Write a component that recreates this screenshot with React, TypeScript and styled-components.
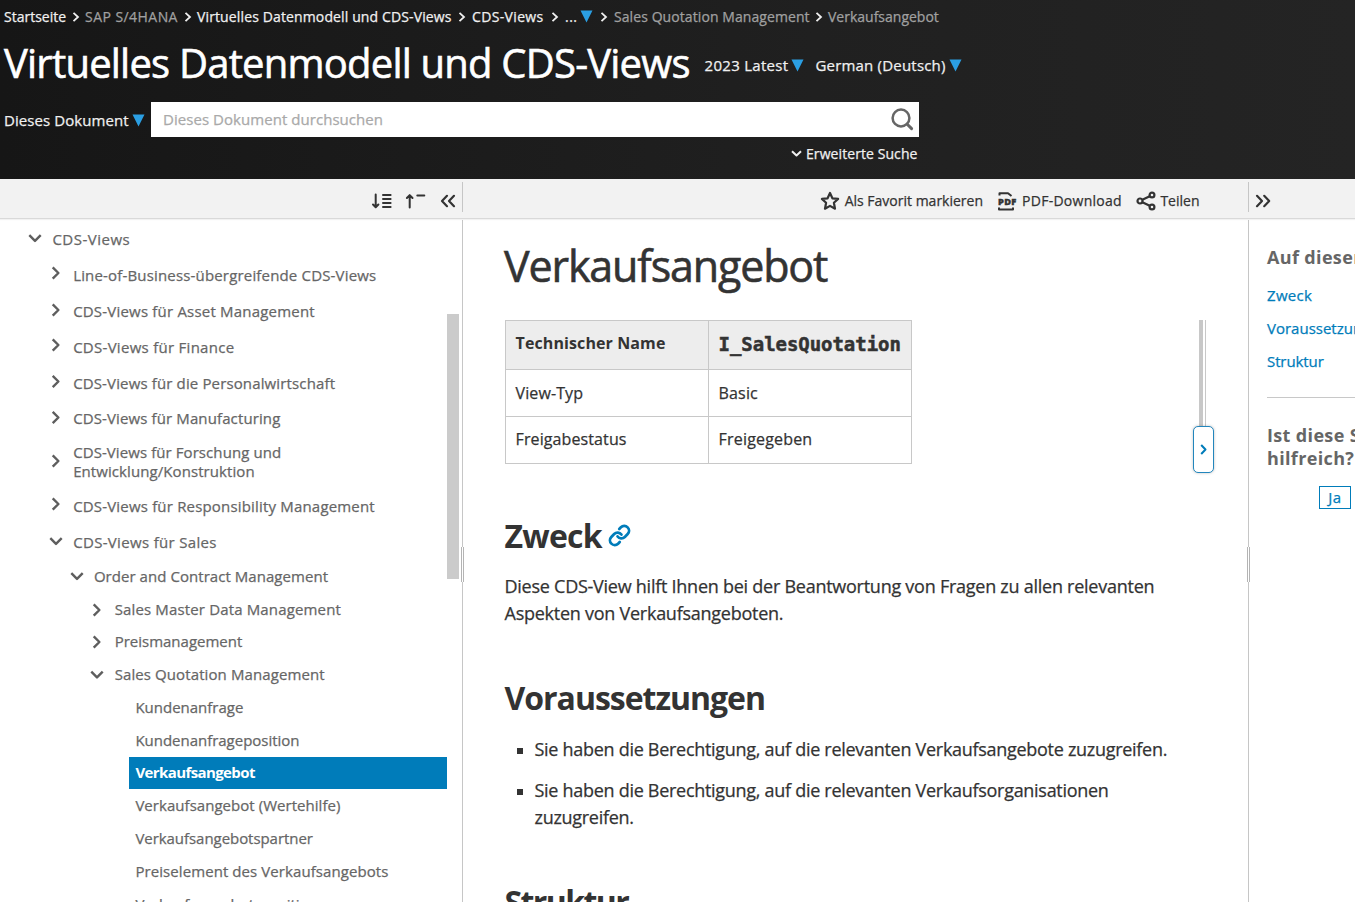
import React from "react";
import styled, { createGlobalStyle, css } from "styled-components";

const GlobalStyle = createGlobalStyle`
  * { box-sizing: border-box; }
  html, body { margin: 0; height: 100%; overflow: hidden; }
  body {
    font-family: "Open Sans", "Noto Sans", sans-serif;
    background: #fff;
    color: #333;
    -webkit-text-stroke: 0.25px currentColor;
  }
  #root { height: 100%; }
  h1, h2, h3, p, ul { margin: 0; padding: 0; }
  svg { display: block; flex: none; }
`;

type Track = { $ls?: number };
const tracking = css<Track>`letter-spacing: ${({ $ls = 0 }) => $ls}px;`;

const Page = styled.div`
  display: flex;
  flex-direction: column;
  height: 902px;
  width: 1355px;
  overflow: hidden;
`;

/* ---------- header ---------- */

const Header = styled.header`
  flex: none;
  height: 179px;
  padding-left: 4px;
  background: linear-gradient(90deg, #161616 0%, #202020 60%, #242424 100%);
  color: #f0f0f0;
`;

const Breadcrumbs = styled.nav`
  display: flex;
  align-items: center;
  height: 33px;
  font-size: 14px;
  white-space: nowrap;
`;

const Crumb = styled.span<Track & { $muted?: boolean; $w: number }>`
  flex: none;
  width: ${({ $w }) => $w}px;
  color: ${({ $muted }) => ($muted ? "#a0a0a0" : "#f0f0f0")};
  ${tracking}
`;

const CrumbSeparator = styled.span<{ $gap?: number }>`
  flex: none;
  display: flex;
  justify-content: center;
  width: ${({ $gap = 20 }) => $gap}px;
`;

const TitleRow = styled.div`
  display: flex;
  align-items: center;
  height: 61px;
`;

const DocTitle = styled.h1`
  width: 700.5px;
  height: 61px;
  font-size: 40px;
  font-weight: 400;
  line-height: 59px;
  letter-spacing: -0.79px;
  white-space: nowrap;
  color: #fff;
  -webkit-text-stroke-width: 0.6px;
`;

const Picker = styled.span<Track & { $mr?: number }>`
  display: flex;
  align-items: center;
  gap: 3px;
  margin-right: ${({ $mr = 0 }) => $mr}px;
  padding-top: 3px;
  font-size: 15px;
  white-space: nowrap;
  ${tracking}
`;

const SearchRow = styled.div`
  display: flex;
  align-items: center;
  height: 35px;
  margin-top: 8px;
`;

const ScopePicker = styled(Picker)`
  width: 147px;
  padding-top: 1px;
  letter-spacing: 0.08px;
`;

const SearchBox = styled.div`
  display: flex;
  align-items: center;
  justify-content: space-between;
  width: 768px;
  height: 35px;
  padding: 0 5px 2px 12px;
  background: #fff;
  color: #a9a9a9;
  font-size: 15px;
  letter-spacing: 0.05px;
`;

const AdvancedSearch = styled.div`
  display: flex;
  align-items: center;
  justify-content: flex-end;
  gap: 4px;
  width: 913.5px;
  height: 33px;
  font-size: 14px;
  letter-spacing: 0.08px;
`;

/* ---------- toolbar ---------- */

const Toolbar = styled.div`
  flex: none;
  display: flex;
  height: 40px;
  background: #f2f2f2;
  border-bottom: 1px solid #d9d9d9;
  box-shadow: 0 1px 1px rgba(0, 0, 0, 0.05);
  font-size: 14px;
  z-index: 1;
`;

const ToolbarSection = styled.div<{ $w?: number; $pr?: number; $pl?: number }>`
  display: flex;
  align-items: center;
  justify-content: ${({ $w }) => ($w ? "flex-end" : "flex-start")};
  ${({ $w }) => ($w ? `width: ${$w}px;` : "flex: 1;")}
  padding: 4px ${({ $pr = 0 }) => $pr}px 0 ${({ $pl = 0 }) => $pl}px;
`;

const ToolbarDivider = styled.div`
  width: 1px;
  height: 30px;
  margin-top: 3px;
  background: #c6c6c6;
`;

const ActionButton = styled.span<Track & { $gap?: number; $mr?: number }>`
  display: flex;
  align-items: center;
  gap: ${({ $gap = 5 }) => $gap}px;
  margin-right: ${({ $mr = 0 }) => $mr}px;
  white-space: nowrap;
  ${tracking}
`;

/* ---------- columns ---------- */

const Columns = styled.div`
  flex: 1;
  min-height: 0;
  display: flex;
`;

const TreePane = styled.aside`
  position: relative;
  flex: none;
  width: 462px;
  padding-top: 2px;
  overflow: hidden;
`;

const TreeScrollThumb = styled.div`
  position: absolute;
  left: 447px;
  top: 95px;
  width: 12px;
  height: 265px;
  background: #cbcbcb;
`;

const TreeRow = styled.div<{ $level: number; $h: number; $lift?: number }>`
  display: flex;
  align-items: center;
  height: ${({ $h }) => $h}px;
  padding-left: ${({ $level }) => 28 + $level * 20.75}px;
  color: #666;
  font-size: 15px;
  line-height: 19px;
  & > svg { transform: translateY(${({ $lift = 0 }) => -$lift}px); }
`;

const TreeLabel = styled.span<Track>`
  margin-left: 10.4px;
  white-space: pre;
  ${tracking}
`;

const TreeLeaf = styled.div<Track & { $active?: boolean }>`
  display: flex;
  align-items: center;
  width: 318px;
  height: ${({ $active }) => ($active ? 32 : 32.8)}px;
  margin: 0 0 ${({ $active }) => ($active ? 0.8 : 0)}px 129px;
  padding: 0 0 2px 6.4px;
  background: ${({ $active }) => ($active ? "#007cba" : "transparent")};
  color: ${({ $active }) => ($active ? "#fff" : "#666")};
  font-size: 15px;
  font-weight: ${({ $active }) => ($active ? 700 : 400)};
  -webkit-text-stroke-width: ${({ $active }) => ($active ? 0 : 0.25)}px;
  white-space: nowrap;
  ${tracking}
`;

const Splitter = styled.div`
  position: relative;
  flex: none;
  width: 1px;
  margin-top: 1px;
  background: #c6c6c6;
`;

const SplitterGrip = styled.div`
  position: absolute;
  left: -1px;
  top: 327px;
  width: 3px;
  height: 35px;
  background: #fff;
  border: solid #b4b4b4;
  border-width: 0 1px;
`;

const Article = styled.main`
  flex: none;
  width: 785px;
  padding: 14px 34px 0 42px;
  overflow: hidden;
`;

const ArticleTitle = styled.h1`
  height: 66px;
  margin-left: -1px;
  font-size: 43px;
  font-weight: 400;
  line-height: 66px;
  letter-spacing: -1.15px;
  -webkit-text-stroke-width: 0.6px;
`;

const TableArea = styled.div`
  display: flex;
  justify-content: space-between;
  height: 144px;
  margin-top: 21px;
`;

const Table = styled.div`
  display: grid;
  grid-template-columns: 202px 202px;
  grid-template-rows: 48px 46px 46px;
  gap: 1px;
  width: 407px;
  height: 144px;
  border: 1px solid #c8c8c8;
  background: #c8c8c8;
`;

const Cell = styled.div<Track & { $head?: boolean; $pb?: number }>`
  display: flex;
  align-items: center;
  padding-left: 9.6px;
  padding-bottom: ${({ $pb = 1 }) => $pb}px;
  background: ${({ $head }) => ($head ? "#ededed" : "#fff")};
  font-size: 16px;
  font-weight: ${({ $head }) => ($head ? 700 : 400)};
  -webkit-text-stroke-width: ${({ $head }) => ($head ? 0 : 0.25)}px;
  white-space: nowrap;
  ${tracking}
`;

const Code = styled.code`
  font-family: "DejaVu Sans Mono", monospace;
  font-size: 19px;
  font-weight: 700;
  letter-spacing: -0.05px;
  -webkit-text-stroke: 0.5px currentColor;
`;

const TableScroll = styled.div`
  position: relative;
  width: 21px;
  height: 152px;
`;

const ScrollShadow = styled.div`
  width: 7px;
  height: 107px;
  margin-left: 6px;
  border: solid #c8c8c8;
  border-width: 0 1px 0 4px;
`;

const ExpandButton = styled.div`
  position: absolute;
  top: 106px;
  left: 0;
  display: flex;
  align-items: center;
  justify-content: center;
  width: 21px;
  height: 47px;
  padding-bottom: 1px;
  border: 1px solid #2286bd;
  border-radius: 5px;
  background: #fff;
  box-shadow: 0 0 3px rgba(0, 0, 0, 0.25);
  color: #007cba;
`;

const SectionTitle = styled.h2<Track & { $mt: number }>`
  display: flex;
  align-items: center;
  gap: 6px;
  height: 44px;
  margin-top: ${({ $mt }) => $mt}px;
  margin-left: -0.5px;
  font-size: 32px;
  line-height: 44px;
  -webkit-text-stroke-width: 0;
  ${tracking}
`;

const Paragraph = styled.p`
  margin: 15px 0 0 -0.5px;
  font-size: 18px;
  line-height: 27px;
  letter-spacing: -0.255px;
  white-space: pre-line;
`;

const Bullets = styled.ul`
  margin-top: 16px;
  list-style: none;
`;

const Bullet = styled.li`
  display: flex;
  margin-bottom: 14px;
  font-size: 18px;
  line-height: 27px;
  letter-spacing: -0.29px;
  white-space: pre;
  &::before {
    content: "";
    flex: none;
    width: 6px;
    height: 6px;
    margin: 12px 12px 0 11.5px;
    background: #333;
  }
`;

const Outline = styled.aside`
  flex: none;
  width: 106px;
  padding: 27px 0 0 18px;
  overflow: hidden;
  white-space: nowrap;
`;

const OutlineTitle = styled.h3<Track>`
  color: #666;
  font-size: 18px;
  line-height: 23px;
  white-space: pre;
  -webkit-text-stroke-width: 0;
  ${tracking}
`;

const OutlineLink = styled.div<Track & { $mt?: number }>`
  margin-top: ${({ $mt = 0 }) => $mt}px;
  height: 33px;
  line-height: 33px;
  color: #007cba;
  font-size: 15px;
  ${tracking}
`;

const OutlineRule = styled.div`
  width: 200px;
  height: 1px;
  margin: 19px 0 26px;
  background: #c8c8c8;
`;

const YesButton = styled.div`
  display: flex;
  align-items: center;
  justify-content: center;
  width: 32px;
  height: 23px;
  margin: 16px 0 0 52px;
  padding-bottom: 2px;
  border: 1px solid #007cba;
  color: #007cba;
  font-size: 15px;
  letter-spacing: 0.5px;
`;

/* ---------- icons ---------- */

const Triangle = () => (
  <svg width="13" height="13" viewBox="0 0 13 13"><path d="M0.5 0.5h12L6.5 12.5z" fill="#2b9fe3" /></svg>
);

const CrumbChevron = () => (
  <svg width="8" height="10" viewBox="0 0 8 10" fill="none" stroke="#f0f0f0" strokeWidth="1.8"><path d="M1.5 0.8L6 5 1.5 9.2" /></svg>
);

const Chevron = ({ open }: { open?: boolean }) => (
  <svg width="14" height="14" viewBox="0 0 14 14" fill="none" stroke="#5e5e5e" strokeWidth="2.4" strokeLinejoin="round">
    <path d={open ? "M1.3 4.2L7 9.9l5.7-5.7" : "M3.7 1.3L9.4 7l-5.7 5.7"} />
  </svg>
);

const ArrowsLeft = () => (
  <svg width="16" height="14" viewBox="0 0 16 14" fill="none" stroke="#333" strokeWidth="2.2" strokeLinecap="round" strokeLinejoin="round">
    <path d="M7 1.800L2 7l5 5.200M14 1.800L9 7l5 5.200" />
  </svg>
);

const ArrowsRight = () => (
  <svg width="16" height="14" viewBox="0 0 16 14" fill="none" stroke="#333" strokeWidth="2.2" strokeLinecap="round" strokeLinejoin="round">
    <path d="M2 1.800L7 7l-5 5.200M9.200 1.800L14.200 7l-5 5.200" />
  </svg>
);

const ExpandAll = () => (
  <svg width="21" height="16" viewBox="0 0 21 16" fill="none" stroke="#333" strokeWidth="2" strokeLinecap="round" strokeLinejoin="round">
    <path d="M4.700 1.500v12M2 11.500l2.700 2.700 2.700-2.700M12 2h7.600M12 6h7.600M12 10h7.600M12 14h7.600" />
  </svg>
);

const CollapseAll = () => (
  <svg width="21" height="16" viewBox="0 0 21 16" fill="none" stroke="#333" strokeWidth="2" strokeLinecap="round" strokeLinejoin="round">
    <path d="M4.700 14.500V2.500M1.900 5l2.800-2.900L7.500 5M12.300 2.400h7" />
  </svg>
);

const SearchIcon = () => (
  <svg width="24" height="24" viewBox="0 0 24 24" fill="none" stroke="#666" strokeWidth="2.5" strokeLinecap="round">
    <circle cx="11" cy="11" r="8.400" /><path d="M17.200 17.200L21.600 21.600" strokeWidth="3" />
  </svg>
);

const StarIcon = () => (
  <svg width="20" height="20" viewBox="0 0 20 20" fill="none" stroke="#333" strokeWidth="2.200" strokeLinejoin="round">
    <path d="M10 2l2.400 5.300 5.700.6-4.200 3.900 1.100 5.900L10 14.900l-5 2.800 1.100-5.900L1.900 7.900l5.700-.6z" />
  </svg>
);

const PdfIcon = () => (
  <svg width="20" height="20" viewBox="0 0 20 20">
    <path d="M2.500 4.500V2.200h8.500L14.500 5M2 16.500v2h14v-2" fill="none" stroke="#333" strokeWidth="2" strokeLinejoin="round" />
    <text x="1" y="13.500" fontSize="9" fontWeight="800" textLength="18.500" lengthAdjust="spacingAndGlyphs" fill="#333" stroke="#333" strokeWidth="0.400">PDF</text>
  </svg>
);

const ShareIcon = () => (
  <svg width="20" height="20" viewBox="0 0 20 20" fill="none" stroke="#333" strokeWidth="2.200">
    <circle cx="4" cy="10" r="2.500" /><circle cx="16" cy="4" r="2.400" /><circle cx="16" cy="16" r="2.400" />
    <path d="M6.400 8.800L13.700 5.200M6.400 11.200L13.700 14.800" />
  </svg>
);

const LinkIcon = () => (
  <svg width="23" height="23" viewBox="0 0 24 24" fill="none" stroke="#007cba" strokeWidth="2.900" strokeLinecap="round">
    <path d="M10 13a5 5 0 0 0 7.540.540l3-3a5 5 0 0 0-7.070-7.070l-1.720 1.710" />
    <path d="M14 11a5 5 0 0 0-7.540-.540l-3 3a5 5 0 0 0 7.070 7.070l1.710-1.710" />
  </svg>
);

const SmallChevron = ({ down }: { down?: boolean }) => (
  <svg width="11" height="11" viewBox="0 0 11 11" fill="none" stroke="currentColor" strokeWidth="2" strokeLinejoin="round">
    <path d={down ? "M1 3.200l4.500 4.300L10 3.200" : "M3.200 1l4.300 4.500L3.200 10"} />
  </svg>
);

/* ---------- data ---------- */

type TreeNode = { label: string; level: number; h: number; open?: boolean; ls: number; lift?: number };

const nodes: TreeNode[] = [
  { label: "CDS-Views", level: 0, h: 36, open: true, ls: 0.5, lift: 1 },
  { label: "Line-of-Business-übergreifende CDS-Views", level: 1, h: 36.75, ls: 0.17, lift: 2 },
  { label: "CDS-Views für Asset Management", level: 1, h: 35.75, ls: 0.2, lift: 2 },
  { label: "CDS-Views für Finance", level: 1, h: 35.75, ls: 0.28, lift: 2 },
  { label: "CDS-Views für die Personalwirtschaft", level: 1, h: 35.75, ls: 0.14, lift: 1.5 },
  { label: "CDS-Views für Manufacturing", level: 1, h: 35.75, ls: 0.12, lift: 1.5 },
  { label: "CDS-Views für Forschung und\nEntwicklung/Konstruktion", level: 1, h: 50, ls: 0.08, lift: 1 },
  { label: "CDS-Views für Responsibility Management", level: 1, h: 39, ls: 0.18, lift: 2 },
  { label: "CDS-Views für Sales", level: 1, h: 32.5, open: true, ls: 0.33, lift: 1 },
  { label: "Order and Contract Management", level: 2, h: 35.5, open: true, ls: 0.05 },
  { label: "Sales Master Data Management", level: 3, h: 31.5, ls: 0.15 },
  { label: "Preismanagement", level: 3, h: 32.8, ls: 0 },
  { label: "Sales Quotation Management", level: 3, h: 33.6, open: true, ls: 0.1, lift: 0.5 },
];

const leaves = [
  { label: "Kundenanfrage", ls: 0 },
  { label: "Kundenanfrageposition", ls: -0.02 },
  { label: "Verkaufsangebot", ls: -0.6, active: true },
  { label: "Verkaufsangebot (Wertehilfe)", ls: 0.04 },
  { label: "Verkaufsangebotspartner", ls: -0.05 },
  { label: "Preiselement des Verkaufsangebots", ls: 0.08 },
  { label: "Verkaufsangebotsposition", ls: 0 },
];

export default function App() {
  return (
    <Page>
      <GlobalStyle />
      <Header>
        <Breadcrumbs>
          <Crumb $w={62}>Startseite</Crumb>
          <CrumbSeparator $gap={19}><CrumbChevron /></CrumbSeparator>
          <Crumb $w={93} $ls={0.45} $muted>SAP S/4HANA</Crumb>
          <CrumbSeparator $gap={19}><CrumbChevron /></CrumbSeparator>
          <Crumb $w={255} $ls={0.13}>Virtuelles Datenmodell und CDS-Views</Crumb>
          <CrumbSeparator><CrumbChevron /></CrumbSeparator>
          <Crumb $w={73} $ls={0.35}>CDS-Views</Crumb>
          <CrumbSeparator><CrumbChevron /></CrumbSeparator>
          <Crumb $w={15} $ls={0.5}>...</Crumb>
          <Triangle />
          <CrumbSeparator $gap={21}><CrumbChevron /></CrumbSeparator>
          <Crumb $w={195} $ls={0.08} $muted>Sales Quotation Management</Crumb>
          <CrumbSeparator $gap={19}><CrumbChevron /></CrumbSeparator>
          <Crumb $w={112} $muted>Verkaufsangebot</Crumb>
        </Breadcrumbs>
        <TitleRow>
          <DocTitle>Virtuelles Datenmodell und CDS-Views</DocTitle>
          <Picker $ls={0.3} $mr={11}>2023 Latest<Triangle /></Picker>
          <Picker $ls={0.2}>German (Deutsch)<Triangle /></Picker>
        </TitleRow>
        <SearchRow>
          <ScopePicker>Dieses Dokument<Triangle /></ScopePicker>
          <SearchBox>Dieses Dokument durchsuchen<SearchIcon /></SearchBox>
        </SearchRow>
        <AdvancedSearch><SmallChevron down />Erweiterte Suche</AdvancedSearch>
      </Header>

      <Toolbar>
        <ToolbarSection $w={462} $pr={6}>
          <ActionButton $mr={13}><ExpandAll /></ActionButton>
          <ActionButton $mr={14}><CollapseAll /></ActionButton>
          <ArrowsLeft />
        </ToolbarSection>
        <ToolbarDivider />
        <ToolbarSection $w={785} $pr={48.5}>
          <ActionButton $mr={14}><StarIcon />Als Favorit markieren</ActionButton>
          <ActionButton $mr={14.5} $ls={0.27}><PdfIcon />PDF-Download</ActionButton>
          <ActionButton $gap={4}><ShareIcon />Teilen</ActionButton>
        </ToolbarSection>
        <ToolbarDivider />
        <ToolbarSection $pl={6}><ArrowsRight /></ToolbarSection>
      </Toolbar>

      <Columns>
        <TreePane>
          {nodes.map((n) => (
            <TreeRow key={n.label} $level={n.level} $h={n.h} $lift={n.lift}>
              <Chevron open={n.open} />
              <TreeLabel $ls={n.ls}>{n.label}</TreeLabel>
            </TreeRow>
          ))}
          {leaves.map((l) => (
            <TreeLeaf key={l.label} $ls={l.ls} $active={l.active}>{l.label}</TreeLeaf>
          ))}
          <TreeScrollThumb />
        </TreePane>
        <Splitter><SplitterGrip /></Splitter>

        <Article>
          <ArticleTitle>Verkaufsangebot</ArticleTitle>
          <TableArea>
            <Table>
              <Cell $head $pb={4} $ls={0.1}>Technischer Name</Cell>
              <Cell $head $pb={2}><Code>I_SalesQuotation</Code></Cell>
              <Cell $ls={0.1}>View-Typ</Cell>
              <Cell $ls={0.15}>Basic</Cell>
              <Cell $pb={2} $ls={0.1}>Freigabestatus</Cell>
              <Cell $pb={2} $ls={0.18}>Freigegeben</Cell>
            </Table>
            <TableScroll>
              <ScrollShadow />
              <ExpandButton><SmallChevron /></ExpandButton>
            </TableScroll>
          </TableArea>
          <SectionTitle $mt={49.5} $ls={-0.75}>Zweck<LinkIcon /></SectionTitle>
          <Paragraph>
            {"Diese CDS-View hilft Ihnen bei der Beantwortung von Fragen zu allen relevanten\nAspekten von Verkaufsangeboten."}
          </Paragraph>
          <SectionTitle $mt={49.5} $ls={-1.02}>Voraussetzungen</SectionTitle>
          <Bullets>
            <Bullet>Sie haben die Berechtigung, auf die relevanten Verkaufsangebote zuzugreifen.</Bullet>
            <Bullet>{"Sie haben die Berechtigung, auf die relevanten Verkaufsorganisationen\nzuzugreifen."}</Bullet>
          </Bullets>
          <SectionTitle $mt={49} $ls={-1.6}>Struktur</SectionTitle>
        </Article>
        <Splitter><SplitterGrip /></Splitter>

        <Outline>
          <OutlineTitle $ls={0.35}>Auf dieser Seite</OutlineTitle>
          <OutlineLink $mt={10} $ls={0.3}>Zweck</OutlineLink>
          <OutlineLink>Voraussetzungen</OutlineLink>
          <OutlineLink $ls={-0.1}>Struktur</OutlineLink>
          <OutlineRule />
          <OutlineTitle $ls={0.35}>{"Ist diese Seite\nhilfreich?"}</OutlineTitle>
          <YesButton>Ja</YesButton>
        </Outline>
      </Columns>
    </Page>
  );
}
